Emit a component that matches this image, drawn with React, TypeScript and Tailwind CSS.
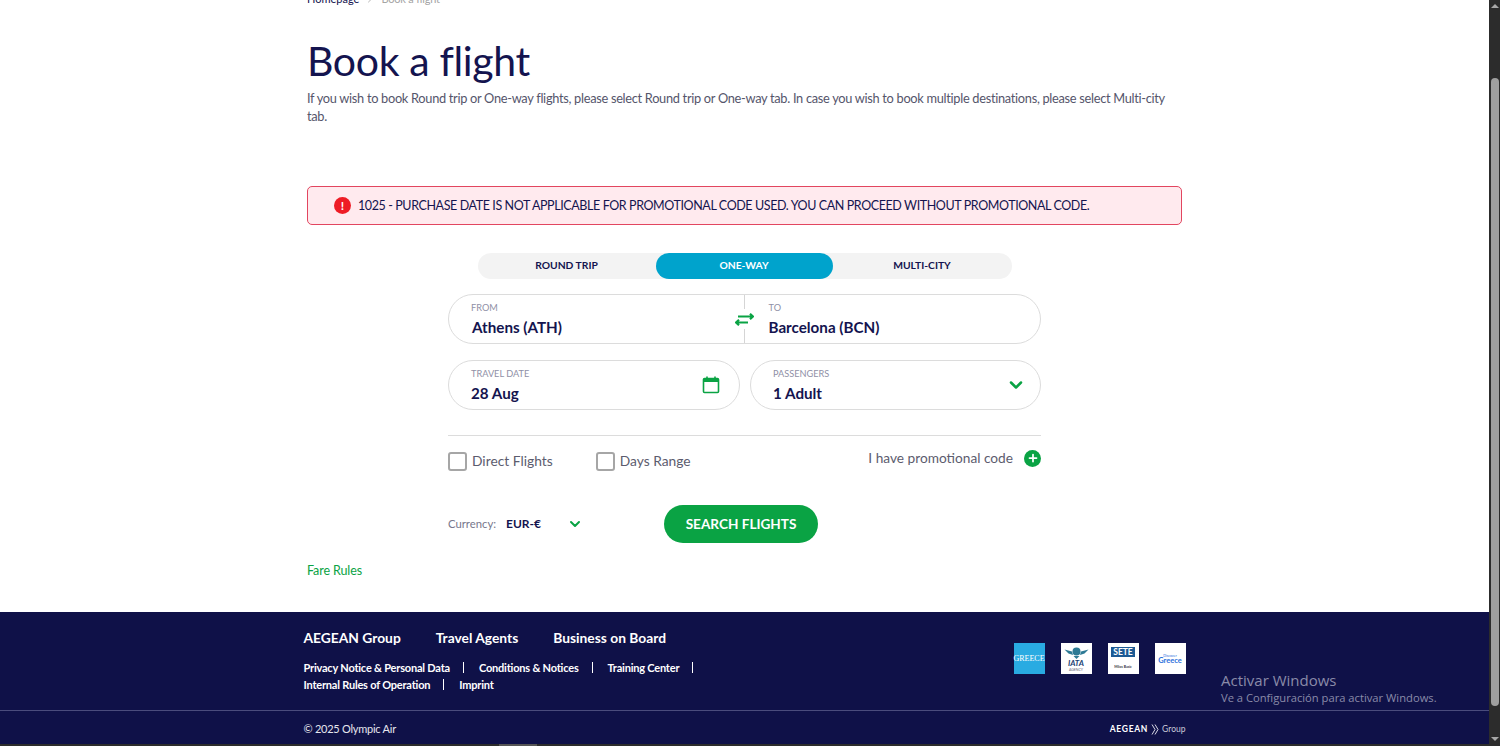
import { ChevronDown, ChevronRight, Plus } from "lucide-react";

const navy = "text-[#14144f]";

function Field({ label, value, right, className = "" }: { label: string; value: string; right?: React.ReactNode; className?: string }) {
  return (
    <div className={`flex items-center justify-between h-[50px] rounded-[25px] border border-[#dcdcdc] pr-[16px] ${className}`}>
      <div className="flex flex-col pt-[1px]">
        <span className="text-[9.2px] leading-[12px] text-[#8f90a6]">{label}</span>
        <span className={`mt-[3px] text-[15.2px] leading-[20px] font-bold ${navy}`}>{value}</span>
      </div>
      {right}
    </div>
  );
}

function CheckRow({ label, className = "" }: { label: string; className?: string }) {
  return (
    <label className={`flex items-center gap-[5px] ${className}`}>
      <span className="w-[19px] h-[19px] rounded-[3px] border-2 border-[#a6a6a6] bg-white" />
      <span className="text-[13.8px] text-[#5c5c6e]">{label}</span>
    </label>
  );
}

function Logos() {
  return (
    <div className="flex gap-[16px] mt-[31px]">
      <div className="w-[31px] h-[31px] bg-[#29abe2] flex items-center justify-center">
        <span className="text-[8px] text-white font-['Liberation_Serif',serif]">GREECE</span>
      </div>
      <div className="w-[31px] h-[31px] bg-white flex flex-col items-center pt-[4px]">
        <svg width="25" height="12" viewBox="0 0 25 12">
          <circle cx="12.5" cy="4.5" r="4" fill="#2d7a95" />
          <path d="M0.5 2.5 L8 4.5 L9 8 L4.5 6.5Z M24.5 2.5 L17 4.5 L16 8 L20.5 6.5Z" fill="#2d7a95" />
          <path d="M9.5 9 H15.5 L12.5 12Z" fill="#2d7a95" />
        </svg>
        <span className="text-[8px] leading-[8px] font-bold italic text-[#1c3f73]">IATA</span>
        <span className="mt-[1px] text-[3.5px] leading-[4px] text-[#667]">AGENCY</span>
      </div>
      <div className="w-[31px] h-[31px] bg-white flex flex-col items-center pt-[4px]">
        <div className="w-[24px] h-[10px] bg-[#1d5a94] flex items-center justify-center">
          <span className="text-[8.5px] leading-[8px] font-bold text-white">SETE</span>
        </div>
        <span className="mt-[8px] text-[3.5px] leading-[4px] font-bold text-[#334]">Milos Basic</span>
      </div>
      <div className="w-[31px] h-[31px] bg-white flex flex-col items-center justify-center">
        <span className="text-[3.5px] leading-[4px] text-[#2a6fdb]">Discover</span>
        <span className="text-[7.5px] leading-[6px] font-bold text-[#2a6fdb]">Greece</span>
      </div>
    </div>
  );
}

function Scrollbar() {
  return (
    <div className="w-[11px] h-full bg-[#2c2c2c] flex flex-col items-center shrink-0">
      <div className="mt-[4px] w-0 h-0 border-x-[4px] border-x-transparent border-b-[4px] border-b-[#a8a8a8]" />
      <div className="mt-[70px] w-[8px] h-[628px] rounded-[4px] bg-[#9f9f9f]" />
      <div className="mt-[31px] w-0 h-0 border-x-[4px] border-x-transparent border-t-[4px] border-t-[#a8a8a8]" />
    </div>
  );
}

function FooterLink({ label, sep = true }: { label: string; sep?: boolean }) {
  return (
    <span className="flex items-center">
      <span>{label}</span>
      {sep && <span className="w-px h-[11px] bg-white ml-[13px] mr-[15px]" />}
    </span>
  );
}

export default function App() {
  return (
    <div className="relative h-[746px] w-[1500px] overflow-hidden flex bg-white font-['Lato',sans-serif]">
      <div className="flex-1 flex flex-col min-w-0">
        <main className="w-[875px] mx-auto flex-1">
          <nav className={`-mt-[8px] flex items-center gap-[5px] h-[14px] text-[11px] ${navy}`}>
            <span>Homepage</span>
            <ChevronRight size={12} className="text-[#b5b5b5]" />
            <span className="text-[#a5a5a5] tracking-[-0.2px]">Book a flight</span>
          </nav>
          <h1 className={`mt-[31px] text-[41px] leading-[48px] tracking-[-0.35px] ${navy}`}>Book a flight</h1>
          <p className="mt-[4px] text-[12.8px] leading-[18px] tracking-[-0.3px] text-[#55556b]">
            If you wish to book Round trip or One-way flights, please select Round trip or One-way tab. In case you wish to book multiple destinations, please select Multi-city tab.
          </p>

          <div className="mt-[61px] h-[39px] rounded-[5px] border border-[#e2455f] bg-[#ffeaee] flex items-center pl-[26px]">
            <span className="w-[17px] h-[17px] rounded-full bg-[#ee1c25] flex items-center justify-center text-white text-[12px] font-bold leading-none">!</span>
            <span className={`ml-[7px] pt-[2px] text-[12.5px] tracking-[-0.4px] ${navy}`}>1025 - PURCHASE DATE IS NOT APPLICABLE FOR PROMOTIONAL CODE USED. YOU CAN PROCEED WITHOUT PROMOTIONAL CODE.</span>
          </div>

          <div className="mt-[28px] mx-auto w-[534px] h-[26px] rounded-[13px] bg-[#f3f3f3] flex text-[10.3px] leading-[24px] font-bold">
            <div className={`w-[178px] text-center ${navy}`}>ROUND TRIP</div>
            <div className="w-[177px] rounded-[13px] bg-[#00a3cc] text-white text-center">ONE-WAY</div>
            <div className={`flex-1 text-center ${navy}`}>MULTI-CITY</div>
          </div>

          <div className="mt-[15px] mx-auto w-[593px]">
            <div className="relative flex h-[50px] rounded-[25px] border border-[#dcdcdc]">
              <div className="w-1/2 pl-[22px] pt-[7px]">
                <div className="text-[9.2px] leading-[12px] text-[#8f90a6]">FROM</div>
                <div className={`mt-[3px] ml-[1px] text-[15.2px] leading-[20px] font-bold ${navy}`}>Athens (ATH)</div>
              </div>
              <div className="w-1/2 pl-[24px] pt-[7px]">
                <div className="text-[9.2px] leading-[12px] text-[#8f90a6]">TO</div>
                <div className={`mt-[3px] text-[15.2px] leading-[20px] font-bold ${navy}`}>Barcelona (BCN)</div>
              </div>
              <div className="absolute left-1/2 top-0 h-full w-px -ml-px bg-[#d5d5d5]" />
              <div className="absolute left-[284px] top-[14px] w-[22px] h-[20px] bg-white flex items-center justify-center">
                <svg width="19" height="13" viewBox="0 0 19 13" fill="none" stroke="#0aa344" strokeWidth="2.2">
                  <path d="M3 3.5H18M15 .8 18 3.5 15 6.2" />
                  <path d="M1 9.5H13M4 6.8 1 9.5 4 12.2" />
                </svg>
              </div>
            </div>

            <div className="mt-[16px] flex justify-between">
              <Field
                label="TRAVEL DATE"
                value="28 Aug"
                className="w-[292px] pl-[22px]"
                right={
                  <svg width="18" height="18" viewBox="0 0 18 18" fill="none" stroke="#0aa344" strokeWidth="1.6" className="mr-[3px]">
                    <rect x="1.5" y="2.5" width="15" height="14" rx="1" />
                    <path d="M1.5 4.5H16.5" strokeWidth="3" />
                    <path d="M5 0.5V2.5M13 0.5V2.5" />
                  </svg>
                }
              />
              <Field
                label="PASSENGERS"
                value="1 Adult"
                className="w-[291px] pl-[22px]"
                right={<ChevronDown size={20} strokeWidth={3} className="text-[#0aa344] -mr-[2px]" />}
              />
            </div>

            <div className="mt-[25px] border-t border-[#dcdcdc] flex items-center justify-between h-[50px]">
              <div className="flex items-center pt-[2px]">
                <CheckRow label="Direct Flights" />
                <CheckRow label="Days Range" className="ml-[43px]" />
              </div>
              <div className="flex items-center -mt-[4px]">
                <span className="text-[13.7px] text-[#5c5c6e]">I have promotional code</span>
                <span className="ml-[11px] w-[17px] h-[17px] rounded-full bg-[#0aa344] flex items-center justify-center">
                  <Plus size={12} strokeWidth={3.5} className="text-white" />
                </span>
              </div>
            </div>

            <div className="mt-[20px] flex items-center h-[38px]">
              <span className="text-[11.3px] text-[#77778c]">Currency:</span>
              <span className={`ml-[10px] text-[12px] font-bold ${navy}`}>EUR-€</span>
              <ChevronDown size={16} strokeWidth={3} className="ml-[26px] text-[#0aa344]" />
              <button className="ml-[81px] w-[154px] h-[38px] rounded-[19px] bg-[#0aa344] text-white text-[13.6px] font-bold">SEARCH FLIGHTS</button>
            </div>
          </div>

          <div className="mt-[20px] text-[12.5px] leading-[16px] tracking-[-0.1px] text-[#0aa344]">Fare Rules</div>
        </main>

        <footer className="h-[134px] bg-[#0f1148] text-white shrink-0 flex flex-col">
          <div className="w-[882px] mx-auto flex justify-between h-[98px]">
            <div>
              <div className="mt-[16px] flex gap-[35px] text-[13.8px] leading-[20px] font-bold">
                <span>AEGEAN Group</span>
                <span>Travel Agents</span>
                <span>Business on Board</span>
              </div>
              <div className="mt-[11px] w-[420px] flex flex-wrap items-center text-[11px] leading-[17px] tracking-[-0.2px] font-bold">
                <FooterLink label="Privacy Notice & Personal Data" />
                <FooterLink label="Conditions & Notices" />
                <FooterLink label="Training Center" />
                <FooterLink label="Internal Rules of Operation" />
                <FooterLink label="Imprint" sep={false} />
              </div>
            </div>
            <Logos />
          </div>
          <div className="border-t border-[#4a4c7c]" />
          <div className="w-[882px] mx-auto flex-1 flex items-center justify-between pt-[3px]">
            <span className="text-[11px] tracking-[-0.25px] text-[#e6e6ee]">© 2025 Olympic Air</span>
            <span className="flex items-center gap-[3px] text-[8.5px]">
              <span className="font-bold tracking-[0.7px]">AEGEAN</span>
              <svg width="8" height="11" viewBox="0 0 8 11" fill="none" stroke="#d8d8e4" strokeWidth="1">
                <path d="M1 .5 4 5.5 1 10.5M4 .5 7 5.5 4 10.5" />
              </svg>
              <span className="text-[#c8c8d8]">Group</span>
            </span>
          </div>
          <div className="h-[2px] bg-[#2c2c2c] shrink-0">
            <div className="ml-[499px] w-[38px] h-full bg-[#555]" />
          </div>
        </footer>
      </div>
      <Scrollbar />

      {/* watermark sits over the footer */}
      <div className="absolute left-[1221px] top-[670px] text-[#8a8ba8] font-['Open_Sans',sans-serif] pointer-events-none">
        <div className="text-[15px] leading-[20px]">Activar Windows</div>
        <div className="text-[11.2px] leading-[16px]">Ve a Configuración para activar Windows.</div>
      </div>
    </div>
  );
}
